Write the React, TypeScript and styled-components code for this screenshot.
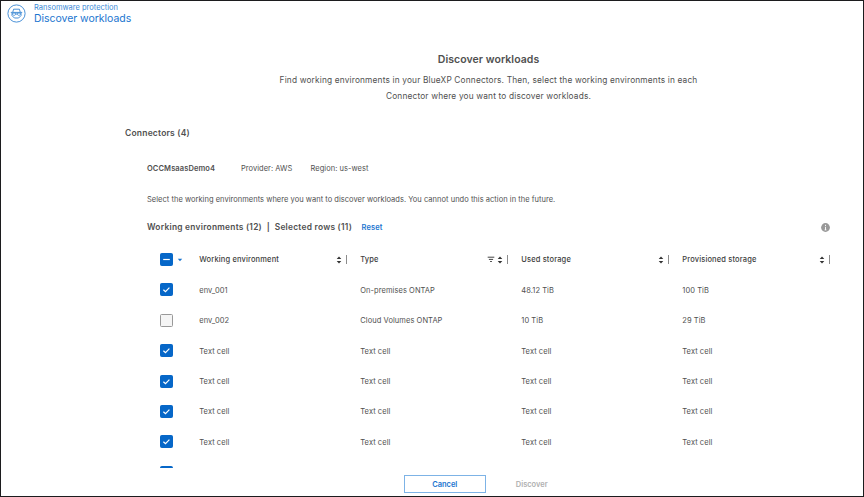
import React from "react";
import styled, { createGlobalStyle } from "styled-components";

const Global = createGlobalStyle`
  * { box-sizing: border-box; }
  html, body { margin: 0; padding: 0; background: #fff; }
  body { font-family: Inter, "Liberation Sans", sans-serif; color: #404040; overflow: hidden; }
`;

const Page = styled.div`
  width: 864px;
  height: 497px;
  border: 1px solid #1c1c1e;
  background: #fff;
  display: flex;
  flex-direction: column;
  overflow: hidden;
`;

const Text = styled.span<{ $size?: number; $weight?: number; $color?: string; $track?: number }>`
  font-size: ${(p) => p.$size ?? 7.5}px;
  font-weight: ${(p) => p.$weight ?? 400};
  color: ${(p) => p.$color ?? "#505050"};
  letter-spacing: ${(p) => p.$track ?? 0}px;
  white-space: pre;
`;

const Header = styled.header`
  display: flex;
  height: 25px;
  padding-left: 6px;
  gap: 8px;
`;

const Logo = styled.svg`
  width: 19px;
  height: 19px;
  margin-top: 3px;
`;

const Titles = styled.div`
  display: flex;
  flex-direction: column;
  line-height: 11px;
  padding-top: 1px;
`;

const Intro = styled.section`
  height: 96px;
  padding-top: 26px;
  padding-left: 111px;
  width: 864px;
  display: flex;
  flex-direction: column;
  align-items: center;
`;

const IntroTitle = styled.div`
  height: 21px;
  line-height: 15px;
  display: flex;
`;

const IntroLine = styled.div`
  height: 15.5px;
  line-height: 15px;
  display: flex;
`;

const Connectors = styled.div`
  height: 23px;
  line-height: 23px;
  padding-left: 124px;
  display: flex;
`;

const Body = styled.main`
  margin-left: 146px;
  width: 684px;
  display: flex;
  flex-direction: column;
`;

const Details = styled.div`
  display: grid;
  grid-template-columns: 94px 69.5px auto;
  margin-top: 14px;
  height: 20px;
  line-height: 20px;
`;

const Note = styled.div`
  margin-top: 11px;
  height: 19px;
  line-height: 19px;
  display: flex;
`;

const Summary = styled.div`
  margin-top: 8px;
  height: 20px;
  display: flex;
  align-items: center;
  line-height: 20px;
`;

const Reset = styled.a`
  display: flex;
  margin-left: 9.5px;
  padding-top: 1px;
  flex: 1;
`;

const InfoIcon = styled.svg`
  width: 9px;
  height: 9px;
  margin-right: 1px;
`;

const Table = styled.div`
  margin-top: 7.4px;
  height: 223.6px;
  overflow: hidden;
`;

const Row = styled.div`
  display: grid;
  grid-template-columns: 52.3px 161px 161px 161px 148.7px;
  height: 30.4px;
  align-items: center;
`;

const HeadCell = styled.div`
  display: flex;
  align-items: center;
  height: 14px;
  line-height: 14px;
`;

const Cell = styled.div`
  display: flex;
  line-height: 14px;
  padding-top: 1.6px;
`;

const HeadLabel = styled.div`
  display: flex;
  padding-top: 1.6px;
`;

const Tools = styled.div`
  display: flex;
  align-items: center;
  margin-left: auto;
  padding-right: 13px;
`;

const LastTools = styled(Tools)`
  padding-right: 1px;
`;

const Divider = styled.i`
  width: 1px;
  height: 9px;
  background: #8c8c8c;
  margin-left: 4px;
`;

const CheckCell = styled.div`
  display: flex;
  align-items: center;
  padding-left: 13px;
  gap: 4px;
`;

const Box = styled.span<{ $on: boolean }>`
  width: 13px;
  height: 13px;
  border-radius: 1.5px;
  border: 1px solid ${(p) => (p.$on ? "#0667c8" : "#999")};
  background: ${(p) => (p.$on ? "#0667c8" : "#f5f5f5")};
  display: flex;
  align-items: center;
  justify-content: center;
`;

const Footer = styled.footer`
  display: flex;
  align-items: center;
  padding: 7px 0 0 402.5px;
`;

const Button = styled.button<{ $outlined?: boolean }>`
  width: ${(p) => (p.$outlined ? 82.5 : 91.5)}px;
  height: 18px;
  padding: 2px 0 0;
  border: 1px solid ${(p) => (p.$outlined ? "#7db3e6" : "transparent")};
  background: transparent;
  font-family: inherit;
  display: flex;
  align-items: center;
  justify-content: center;
`;

const Sort = () => (
  <svg width="6" height="8" viewBox="0 0 6 8">
    <path d="M.7 3 3 .6 5.3 3zM.7 5h4.6L3 7.4z" fill="#333" />
  </svg>
);

const FilterIcon = styled.svg`
  width: 8px;
  height: 7px;
  margin-right: 2px;
`;

const Filter = () => (
  <FilterIcon viewBox="0 0 8 7">
    <path d="M.7 1.2h6.6M1.9 3.4h4.2M3.1 5.5h1.8" stroke="#444" strokeWidth="1" />
  </FilterIcon>
);

const Check = ({ on, mixed }: { on: boolean; mixed?: boolean }) => (
  <Box $on={on}>
    {on && (
      <svg width="11" height="11" viewBox="0 0 11 11" fill="none" stroke="#fff" strokeWidth="1.2">
        <path d={mixed ? "M2.2 5.5h6.6" : "M2.4 5.7 4.5 7.7 8.4 3.7"} />
      </svg>
    )}
  </Box>
);

const columns = ["Working environment", "Type", "Used storage", "Provisioned storage"];

const filler = ["Text cell", "Text cell", "Text cell", "Text cell"];
const rows = [
  { on: true, cells: ["env_001", "On-premises ONTAP", "48.12 TiB", "100 TiB"] },
  { on: false, cells: ["env_002", "Cloud Volumes ONTAP", "10 TiB", "29 TiB"] },
  { on: true, cells: filler },
  { on: true, cells: filler },
  { on: true, cells: filler },
  { on: true, cells: filler },
  { on: true, cells: [] },
];

export default function App() {
  return (
    <>
      <Global />
      <Page>
        <Header>
          <Logo viewBox="0 0 19 19" fill="none" stroke="#3585d2">
            <circle cx="9.5" cy="9.5" r="8.6" strokeWidth="0.9" />
            <path d="M5.8 8 6.6 5.2h5.8l.8 2.8M3.8 8.4h11.4M5 9v2.6l2.4 2.4h4.2l2.4-2.4V9M8.3 10h2.4" strokeWidth="0.9" />
            <path d="M5.6 9.2h3v1.2q-.3 1-1.5 1t-1.5-1zM10.4 9.2h3v1.2q-.3 1-1.5 1t-1.5-1z" strokeWidth="0.7" />
          </Logo>
          <Titles>
            <Text $size={7.5} $color="#3b8ad6">Ransomware protection</Text>
            <Text $size={10.5} $color="#1b75cf" $track={-0.04}>Discover workloads</Text>
          </Titles>
        </Header>
        <Intro>
          <IntroTitle><Text $size={10.5} $weight={600} $track={0.06}>Discover workloads</Text></IntroTitle>
          <IntroLine>
            <Text $size={8.3} $track={0.17}>Find working environments in your BlueXP Connectors. Then, select the working environments in each</Text>
          </IntroLine>
          <IntroLine>
            <Text $size={8.3} $track={0.17}>Connector where you want to discover workloads.</Text>
          </IntroLine>
        </Intro>
        <Connectors><Text $size={8.5} $weight={600} $track={0.2}>Connectors (4)</Text></Connectors>
        <Body>
          <Details>
            <Text $weight={600} $track={0.1}>OCCMsaasDemo4</Text>
            <Text $track={0.04}>Provider: AWS</Text>
            <Text $track={0.04}>Region: us-west</Text>
          </Details>
          <Note>
            <Text $track={0.03}>Select the working environments where you want to discover workloads. You cannot undo this action in the future.</Text>
          </Note>
          <Summary>
            <Text $size={8.4} $weight={600} $track={0.25}>Working environments (12)  |  Selected rows (11)</Text>
            <Reset><Text $weight={600} $track={0.08} $color="#1b75cf">Reset</Text></Reset>
            <InfoIcon viewBox="0 0 9 9">
              <circle cx="4.5" cy="4.5" r="4.4" fill="#999" />
              <path d="M4.5 1.8v1.2M4.5 3.8v3.2M3.6 6.9h1.8" stroke="#fff" strokeWidth="0.9" />
            </InfoIcon>
          </Summary>
          <Table>
            <Row>
              <CheckCell>
                <Check on mixed />
                <svg width="6" height="4" viewBox="0 0 6 4"><path d="M.8.8h4.4L3 3.2z" fill="#1b75cf" /></svg>
              </CheckCell>
              {columns.map((name, i) => {
                const Group = i === 3 ? LastTools : Tools;
                return (
                  <HeadCell key={name}>
                    <HeadLabel><Text $weight={500} $track={0.15} $color="#404040">{name}</Text></HeadLabel>
                    <Group>
                      {i === 1 && <Filter />}
                      <Sort />
                      <Divider />
                    </Group>
                  </HeadCell>
                );
              })}
            </Row>
            {rows.map((row, i) => (
              <Row key={i}>
                <CheckCell><Check on={row.on} /></CheckCell>
                {row.cells.map((cell, j) => (
                  <Cell key={j}><Text $track={0.06}>{cell}</Text></Cell>
                ))}
              </Row>
            ))}
          </Table>
        </Body>
        <Footer>
          <Button $outlined><Text $weight={600} $color="#1b75cf">Cancel</Text></Button>
          <Button><Text $weight={600} $color="#b0b0b0">Discover</Text></Button>
        </Footer>
      </Page>
    </>
  );
}
